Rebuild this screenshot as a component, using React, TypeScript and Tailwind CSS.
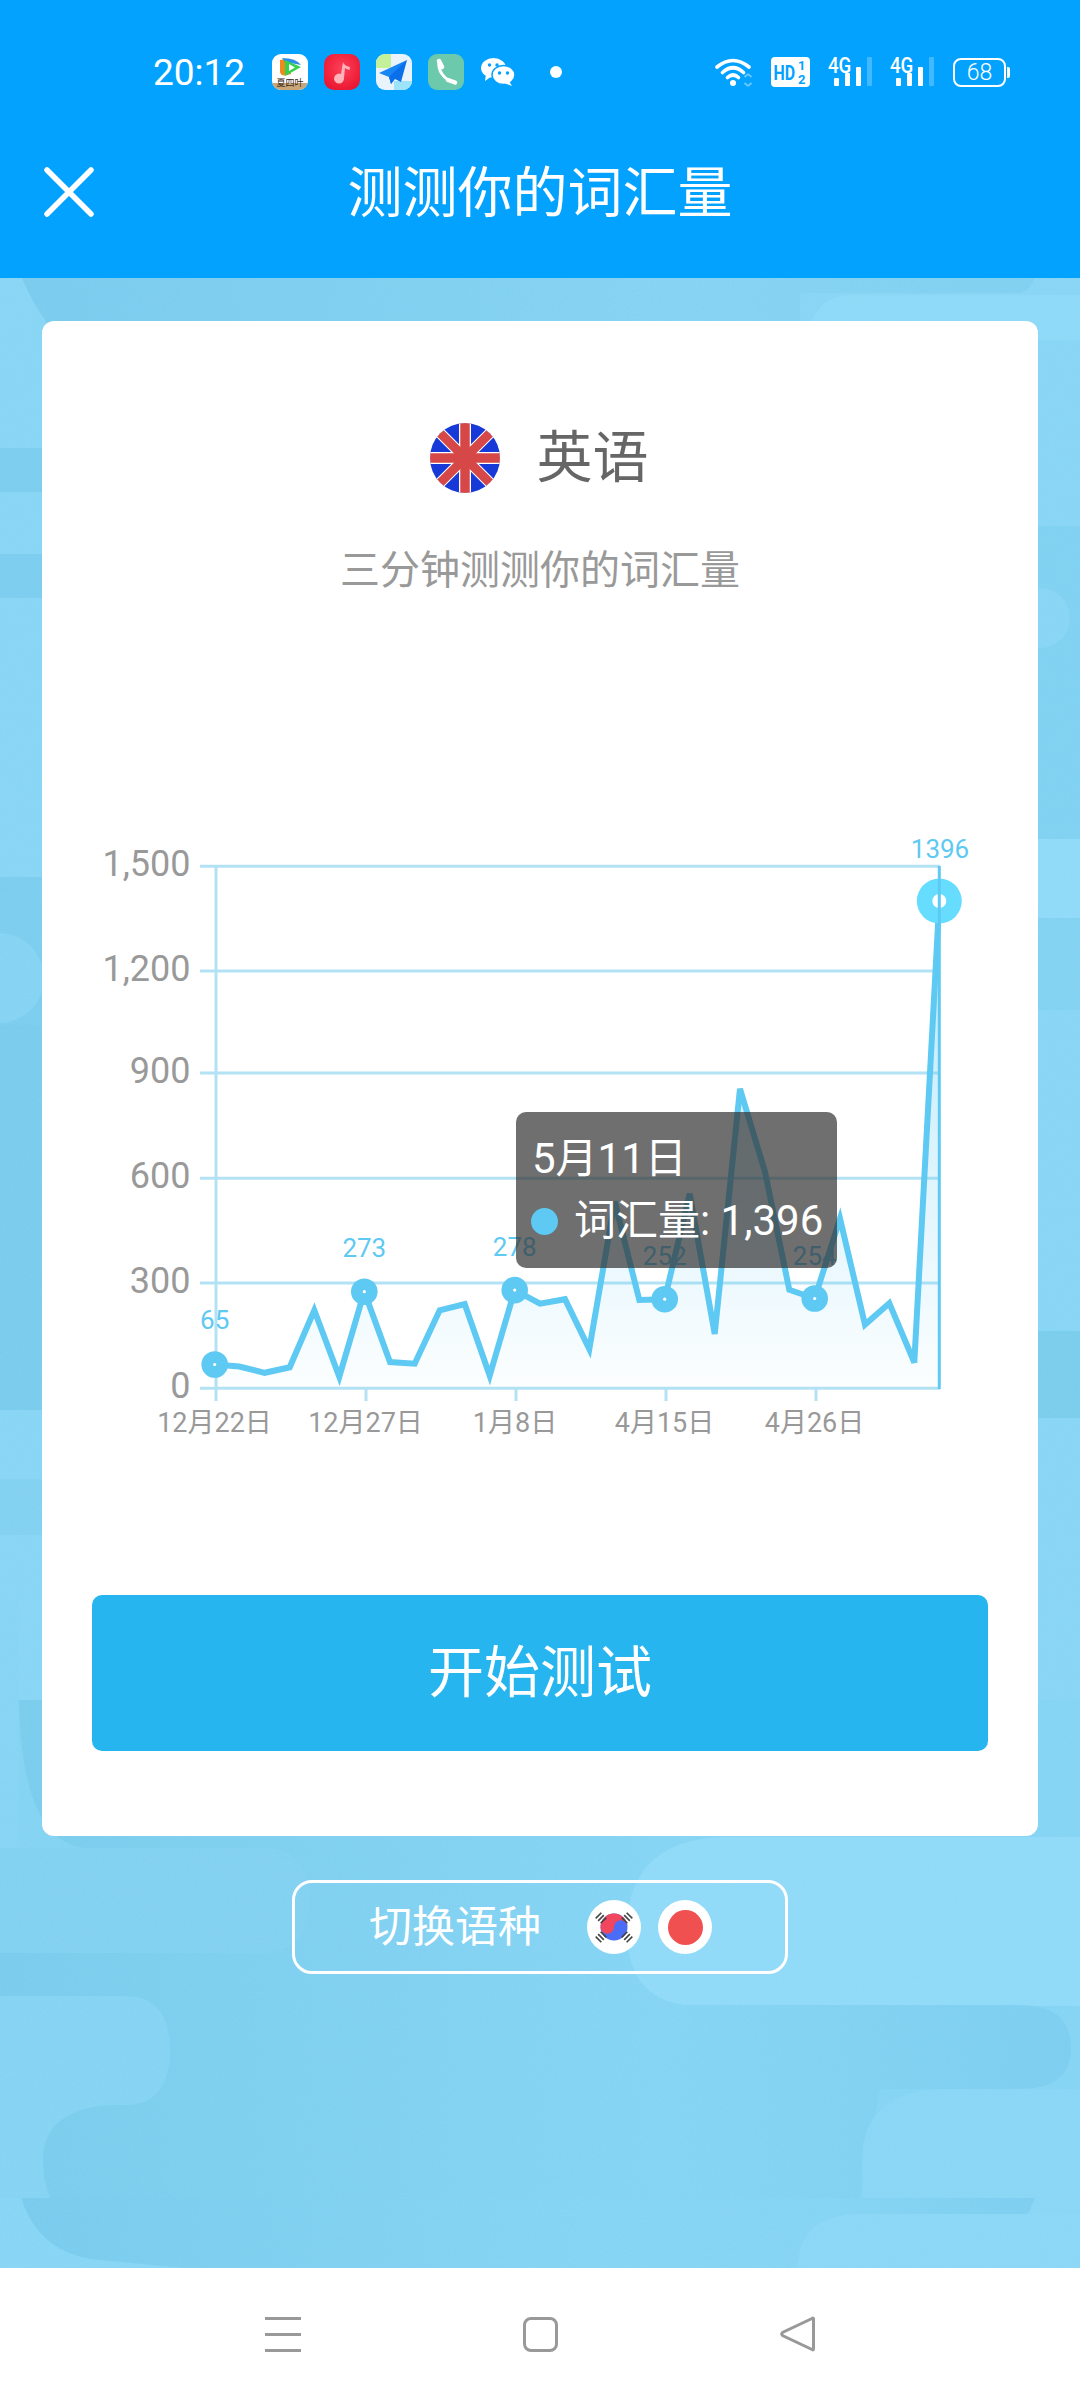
import React from "react";

const font = "font-['Roboto','Noto_Sans_CJK_SC',sans-serif]";

const pts: [number, number][] = [
  [214.7, 1364.5], [239.3, 1366.5], [264.7, 1372.8], [289.7, 1367.3], [314.3, 1310.3], [339.3, 1376.7],
  [364.3, 1291.7], [390, 1362.1], [414.7, 1363.7], [439.7, 1310.3], [464.7, 1304], [489.7, 1375.6],
  [514.7, 1290.1], [540, 1303.6], [565, 1299.2], [589.3, 1349], [614.7, 1201.6], [639.3, 1300],
  [664.7, 1299.2], [689.7, 1193.7], [714.7, 1334], [740, 1088.9], [765, 1171.9], [789.3, 1289.8],
  [814.7, 1298.5], [840, 1218.6], [865, 1324.6], [889.3, 1303.2], [914.3, 1362.5], [939.3, 901],
];
const lineStr = pts.map((p) => p.join(",")).join(" ");
const areaStr = `214.7,1388 ${lineStr} 939.3,1388`;
const grids = [866.3, 971, 1073, 1178.2, 1283, 1388.2];
const yLabels = ["1,500", "1,200", "900", "600", "300", "0"];
const ticks = [216, 366, 516, 666, 816];
const xLabels: [number, string][] = [[214.5, "12月22日"], [365.5, "12月27日"], [515, "1月8日"], [664.5, "4月15日"], [814.5, "4月26日"]];
const markers: [number, number][] = [[214.7, 1364.5], [364.3, 1291.7], [514.7, 1290.1], [664.7, 1299.2], [814.7, 1298.5]];
const valueLabels: [number, number, string][] = [[214.7, 1329, "65"], [364.3, 1257, "273"], [514.7, 1256, "278"], [664.7, 1265, "252"], [814.7, 1265, "254"], [940, 857.6, "1396"]];

function Background() {
  const dark = "#7ccdef";
  const mid = "#82d1f2";
  const light = "#90daf8";
  const soft = "#88d5f5";
  return (
    <svg className="absolute inset-0 w-full h-full" viewBox="0 278 1080 1990" preserveAspectRatio="none">
      <defs>
        <linearGradient id="topDark" x1="0" x2="1" y1="0" y2="0">
          <stop offset="0" stopColor="#7acbee" />
          <stop offset="0.65" stopColor="#85d3f3" />
          <stop offset="1" stopColor="#80d0f1" />
        </linearGradient>
        <linearGradient id="midDark" x1="0" x2="1" y1="0" y2="0">
          <stop offset="0" stopColor="#7acced" />
          <stop offset="0.6" stopColor="#85d4f4" />
          <stop offset="1" stopColor="#85d4f4" />
        </linearGradient>
        <linearGradient id="rightDark" gradientUnits="userSpaceOnUse" x1="680" x2="1071" y1="0" y2="0">
          <stop offset="0" stopColor="#85d4f4" />
          <stop offset="1" stopColor="#7dcef0" />
        </linearGradient>
        <linearGradient id="bandDark" gradientUnits="userSpaceOnUse" x1="21" x2="1035" y1="0" y2="0">
          <stop offset="0" stopColor="#79cbed" />
          <stop offset="0.55" stopColor="#85d4f4" />
          <stop offset="0.8" stopColor="#85d4f4" />
          <stop offset="1" stopColor="#7dcef0" />
        </linearGradient>
        <filter id="grain" x="0" y="0" width="100%" height="100%">
          <feTurbulence type="fractalNoise" baseFrequency="0.5 0.9" numOctaves="2" seed="4" />
          <feColorMatrix values="0 0 0 0 1  0 0 0 0 1  0 0 0 0 1  0.5 0 0 0 -0.14" />
        </filter>
      </defs>
      <rect x="0" y="278" width="1080" height="1990" fill={soft} />
      {/* top */}
      <path d="M22 278 H1035 Q1030 290 1020 293 H800 V340 H60 Q35 310 22 278Z" fill="url(#topDark)" />
      <path d="M805 340 Q815 295 850 295 H1080 V340Z" fill={light} opacity="0.7" />
      {/* left column */}
      <rect x="0" y="448" width="100" height="44" fill={dark} />
      <rect x="0" y="554" width="100" height="44" fill={dark} />
      <rect x="0" y="877" width="100" height="150" fill={dark} />
      <rect x="-60" y="933" width="104" height="90" rx="45" fill="#85d3f3" />
      <rect x="0" y="1025" width="100" height="385" fill="#7acced" />
      <rect x="0" y="1479" width="100" height="56" fill={mid} />
      {/* right column */}
      <rect x="1000" y="526" width="80" height="313" fill="#80d1f2" />
      <rect x="1000" y="588" width="70" height="60" rx="30" fill="#88d5f5" />
      <rect x="1000" y="839" width="80" height="79" fill={light} />
      <rect x="1000" y="918" width="80" height="92" fill="#82d2f2" />
      <rect x="1000" y="1331" width="80" height="87" fill="#7acdec" />
      {/* lower part */}
      <rect x="0" y="1700" width="1080" height="568" fill="url(#midDark)" />
      <path d="M0 1700 H19 Q22 1848 90 1848 H0Z" fill="#84d3f3" />
      <rect x="0" y="1600" width="19" height="248" fill="#86d4f4" />
      <path d="M0 1848 H260 Q310 1848 310 1900 Q310 1953 260 1953 H0Z" fill="#82d1f1" />
      <path d="M627 1930 C627 1880 650 1837 730 1837 H1080 V2006 H700 Q627 2006 627 1930Z" fill={light} />
      <path d="M680 2005 H1020 Q1071 2005 1071 2048 Q1071 2089 1020 2089 H880 L860 2198 H680Z" fill="url(#rightDark)" />
      <path d="M0 1996 H125 Q170 1996 170 2050 Q170 2105 125 2105 H0Z" fill="#85d3f3" />
      <path d="M0 2105 H110 Q43 2110 43 2160 Q43 2190 60 2220 H0Z" fill="#85d3f3" />
      <path d="M950 2089 Q862 2089 862 2160 V2198 H1080 V2089Z" fill="#89d6f5" />
      <path d="M21 2198 H1035 Q1033 2210 1025 2214 H860 V2268 H185 L100 2260 Q40 2255 21 2198Z" fill="url(#bandDark)" />
      <path d="M797 2268 Q800 2214 860 2214 H1080 V2268Z" fill="#8bd7f6" />
      <path d="M1035 2198 H1080 V2214 H1028Z" fill="#89d6f5" />
      <path d="M0 2198 H21 Q40 2255 100 2260 L185 2268 H0Z" fill="#87d5f5" />
      <rect x="0" y="278" width="1080" height="1990" filter="url(#grain)" opacity="0.14" />
    </svg>
  );
}

function StatusIcons() {
  return (
    <div className="flex items-center">
      {/* video */}
      <svg width="36" height="36" viewBox="0 0 36 36" className="mr-[16px]">
        <defs><clipPath id="c1"><rect width="36" height="36" rx="9" /></clipPath></defs>
        <g clipPath="url(#c1)">
          <rect width="36" height="36" fill="#fff" />
          <rect y="29" width="36" height="7" fill="#c9a678" />
          <path d="M8 6 Q20 3 19 12 L19 20 Q8 24 8 17Z" fill="#f08a1d" />
          <path d="M10 4 Q24 4 29 11 L13 8Z" fill="#2f8fe8" />
          <path d="M13 6 L29 13 L13 22Z" fill="#35d14f" />
          <path d="M17 10 L23 13.5 L17 17Z" fill="#fff" />
          <text x="18" y="32" textAnchor="middle" fontSize="9" fill="#3a2a1a" fontFamily="'Noto Sans CJK SC',sans-serif">夏四叶</text>
        </g>
      </svg>
      {/* music */}
      <svg width="36" height="36" viewBox="0 0 36 36" className="mr-[16px]">
        <defs>
          <radialGradient id="r1" cx="0.5" cy="0.4" r="0.7"><stop offset="0" stopColor="#ff4058" /><stop offset="1" stopColor="#e8122c" /></radialGradient>
        </defs>
        <rect width="36" height="36" rx="10" fill="url(#r1)" />
        <path d="M19 8 Q20 12 26 13 L25.5 16 Q22 15 21 14 L20 24 A5 5 0 1 1 17 20Z" fill="#ffb3ba" />
      </svg>
      {/* map */}
      <svg width="36" height="36" viewBox="0 0 36 36" className="mr-[16px]">
        <defs><clipPath id="c3"><rect width="36" height="36" rx="9" /></clipPath></defs>
        <g clipPath="url(#c3)">
          <rect width="36" height="36" fill="#e8f3fb" />
          <rect width="15" height="14" fill="#c5f09a" />
          <rect x="18" y="27" width="18" height="9" fill="#9fe3fb" />
          <path d="M31 6 L3 19 L13 23 L15 30Z" fill="#1685f5" />
          <path d="M31 6 L13 23 L15 30 L19 25 L25 28Z" fill="#0a6fe8" />
        </g>
      </svg>
      {/* phone */}
      <svg width="36" height="36" viewBox="0 0 36 36" className="mr-[17px]">
        <rect width="36" height="36" rx="9" fill="#6cc9ab" />
        <path d="M11 8 Q10 14 14 20 Q19 27 26 28" fill="none" stroke="#fff" strokeWidth="3" />
        <path d="M11 7 L14 13 M20 26 L27 28.5" stroke="#fff" strokeWidth="4.5" strokeLinecap="round" />
      </svg>
      {/* wechat */}
      <svg width="34" height="28" viewBox="0 0 34 28">
        <ellipse cx="12.5" cy="10" rx="12.5" ry="10" fill="#fff" />
        <path d="M5 16 L4 23 L11 18Z" fill="#fff" />
        <ellipse cx="22.5" cy="17" rx="11.5" ry="9.5" stroke="#03a2ff" strokeWidth="1.5" fill="#fff" />
        <path d="M28 23 L31 28 L23 25Z" fill="#fff" />
        <circle cx="8.5" cy="7" r="1.7" fill="#03a2ff" />
        <circle cx="16" cy="7" r="1.7" fill="#03a2ff" />
        <circle cx="18.5" cy="15" r="1.7" fill="#03a2ff" />
        <circle cx="26.5" cy="15" r="1.7" fill="#03a2ff" />
      </svg>
      <div className="ml-[35px] w-[12px] h-[12px] rounded-full bg-white" />
    </div>
  );
}

function Signal({ mr }: { mr: string }) {
  return (
    <svg width="44" height="38" viewBox="0 -8 44 38" className={`-mt-[8px] ${mr}`}>
      <text transform="translate(0 16) scale(0.85 1)" fontSize="22" fontWeight="500" fill="#fff" fontFamily="Roboto,sans-serif">4G</text>
      <rect x="6" y="21" width="5" height="8" rx="1" fill="#fff" />
      <rect x="17" y="16" width="5" height="13" rx="1" fill="#fff" />
      <rect x="28" y="10" width="5" height="19" rx="1" fill="#fff" />
      <rect x="39" y="0" width="5" height="29" rx="1" fill="#fff" opacity="0.25" />
    </svg>
  );
}

function StatusRight() {
  return (
    <div className="flex items-center">
      <svg width="38" height="30" viewBox="0 0 38 30" className="mr-[18px]">
        <g fill="none" stroke="#fff" strokeWidth="3.6" strokeLinecap="round">
          <path d="M2 10 Q18 -3 34 10" />
          <path d="M7.5 15.5 Q18 6 28.5 15.5" />
          <path d="M12.5 20.5 Q18 15.5 23.5 20.5" />
        </g>
        <circle cx="18" cy="26" r="3" fill="#fff" />
        <path d="M33 17 L29.5 20 M33 17 L36.5 20 M33 29 L29.5 26 M33 29 L36.5 26" stroke="#fff" strokeOpacity="0.4" strokeWidth="2" fill="none" />
      </svg>
      <div className="relative w-[39px] h-[30px] mr-[18px] rounded-[4px] bg-white">
        <svg width="39" height="30" viewBox="0 0 39 30" className="absolute inset-0">
          <text transform="translate(2.5 23) scale(0.76 1)" fontSize="21" fontWeight="700" fill="#03a2ff" fontFamily="Roboto,sans-serif">HD</text>
          <text x="27" y="13" fontSize="13" fontWeight="700" fill="#03a2ff" fontFamily="Roboto,sans-serif">1</text>
          <text x="27" y="27" fontSize="13" fontWeight="700" fill="#03a2ff" fontFamily="Roboto,sans-serif">2</text>
        </svg>
      </div>
      <Signal mr="mr-[18px]" />
      <Signal mr="mr-[19px]" />
      <div className="relative flex items-center justify-center w-[53px] h-[29px] rounded-[8px] border-[2.5px] border-white text-white text-[23px] font-light leading-none">
        68
        <div className="absolute left-[52px] top-[7px] w-[3px] h-[11px] rounded-r-[2px] bg-white" />
      </div>
    </div>
  );
}

function UkFlag() {
  const d = "M6 6 L64 64 M64 6 L6 64";
  const c = "M35 0 V70 M0 35 H70";
  return (
    <svg width="70" height="70" viewBox="0 0 70 70">
      <defs><clipPath id="uk"><circle cx="35" cy="35" r="35" /></clipPath></defs>
      <g clipPath="url(#uk)">
        <rect width="70" height="70" fill="#1639d8" />
        <path d={d} stroke="#fff" strokeWidth="11" strokeLinecap="square" />
        <path d={c} stroke="#fff" strokeWidth="12" />
        <path d={d} stroke="#d64848" strokeWidth="9" strokeLinecap="square" />
        <path d={c} stroke="#d64848" strokeWidth="9.5" />
      </g>
    </svg>
  );
}

function KrFlag() {
  const tri = "M0 -3.5 H8 M0 0 H8 M0 3.5 H8";
  return (
    <svg width="54" height="54" viewBox="0 0 54 54">
      <circle cx="27" cy="27" r="27" fill="#fff" />
      <circle cx="27" cy="27" r="13.5" fill="#4a6cf7" />
      <path d="M13.5 27 A13.5 13.5 0 0 1 40.5 27 A6.75 6.75 0 0 0 27 27 A6.75 6.75 0 0 1 13.5 27Z" fill="#f0465e" />
      <g stroke="#444" strokeWidth="1.6" fill="none">
        <path d={tri} transform="translate(10 18) rotate(-45 4 0)" />
        <path d={tri} transform="translate(36 18) rotate(45 4 0)" />
        <path d={tri} transform="translate(10 37) rotate(45 4 0)" />
        <path d={tri} transform="translate(36 37) rotate(-45 4 0)" />
      </g>
    </svg>
  );
}

function Chart() {
  return (
    <div className="relative mt-[231px] h-[620px]">
      <svg width="996" height="620" viewBox="42 830 996 620" className="block">
        <defs>
          <linearGradient id="area" gradientUnits="userSpaceOnUse" x1="0" x2="0" y1="880" y2="1388">
            <stop offset="0" stopColor="#5ec9f2" stopOpacity="0.45" />
            <stop offset="1" stopColor="#5ec9f2" stopOpacity="0.02" />
          </linearGradient>
        </defs>
        {grids.map((y, i) => (
          <g key={y}>
            <line x1="200" x2="940" y1={y} y2={y} stroke="#b2e2f3" strokeWidth="3" />
            <text x="190.5" y={y + 10} textAnchor="end" fontSize="36" fill="#999">{yLabels[i]}</text>
          </g>
        ))}
        <line x1="216" x2="216" y1="865" y2="1401" stroke="#b2e2f3" strokeWidth="3" />
        {ticks.slice(1).map((x) => (
          <line key={x} x1={x} x2={x} y1="1388" y2="1401" stroke="#b2e2f3" strokeWidth="3" />
        ))}
        {xLabels.map(([x, t]) => (
          <text key={t} x={x} y="1432" textAnchor="middle" fontSize="27" fill="#999">{t}</text>
        ))}
        <polygon points={areaStr} fill="url(#area)" />
        <polyline points={lineStr} fill="none" stroke="#5ec9f2" strokeWidth="6" strokeLinejoin="miter" />
        {markers.map(([x, y]) => (
          <g key={x}>
            <circle cx={x} cy={y} r="13.3" fill="#5ec9f2" />
            <circle cx={x} cy={y} r="1.6" fill="#fff" />
          </g>
        ))}
        <circle cx="939.3" cy="901" r="22.5" fill="#66dcff" />
        <circle cx="939.3" cy="901" r="7" fill="#fff" />
        <line x1="939.3" x2="939.3" y1="866" y2="1389" stroke="#5ec9f2" strokeWidth="3" />
        {valueLabels.map(([x, y, t]) => (
          <text key={t} x={x} y={y} textAnchor="middle" fontSize="26" fill="#5ec9f2">{t}</text>
        ))}
      </svg>
      <div className="absolute left-[474px] top-[282px] w-[321px] h-[156px] rounded-[10px] bg-[rgba(50,50,50,0.7)] text-white text-[42px] leading-[62px] pl-[16px] pt-[16px]">
        <div>5月11日</div>
        <div className="flex items-center">
          <span className="w-[27px] h-[27px] rounded-full bg-[#5ec9f2] mr-[16px] -ml-[1px]" />
          <span>词汇量: 1,396</span>
        </div>
      </div>
    </div>
  );
}

export default function App() {
  return (
    <div className={`${font} w-[1080px] h-[2400px] flex flex-col bg-white overflow-hidden`}>
      <header className="h-[278px] bg-[#03a2ff] text-white shrink-0">
        <div className="h-[144px] flex items-center justify-between pl-[153px] pr-[74px]">
          <div className="flex items-center">
            <span className="text-[37px] leading-none mr-[27px]">20:12</span>
            <StatusIcons />
          </div>
          <StatusRight />
        </div>
        <div className="relative h-[96px] flex items-center justify-center text-[55px] leading-none pt-[2px]">
          <svg width="50" height="50" viewBox="0 0 50 50" className="absolute left-[44px] top-[23px]">
            <path d="M3 3 L47 47 M47 3 L3 47" stroke="#fff" strokeWidth="5.5" strokeLinecap="round" />
          </svg>
          测测你的词汇量
        </div>
      </header>

      <main className="relative flex-1 pt-[43px]">
        <Background />
        <section className="relative mx-[42px] rounded-[12px] bg-white flex flex-col pt-[102px] pb-[85px]">
          <div className="flex items-center justify-center h-[70px] pr-[2px]">
            <UkFlag />
            <span className="ml-[37px] text-[56px] leading-none text-[#666]">英语</span>
          </div>
          <div className="mt-[50px] text-center text-[40px] leading-[56px] text-[#999]">三分钟测测你的词汇量</div>
          <Chart />
          <button className="mt-[145px] mx-[50px] h-[156px] rounded-[10px] bg-[#26b5ef] text-white text-[56px]">开始测试</button>
        </section>
        <div className="relative mt-[44px] mx-auto w-[496px] h-[94px] rounded-[20px] border-[3px] border-white flex items-center pl-[74px] text-white text-[43px]">
          <span className="mr-[46px] leading-none">切换语种</span>
          <KrFlag />
          <span className="ml-[17px] w-[54px] h-[54px] rounded-full bg-white flex items-center justify-center">
            <span className="w-[35px] h-[35px] rounded-full bg-[#f05050]" />
          </span>
        </div>
      </main>

      <nav className="h-[132px] shrink-0 bg-white relative flex items-center justify-center gap-[222px]">
        <div className="w-[36px] h-[35px] flex flex-col justify-between">
          <div className="h-[3px] bg-[#999]" />
          <div className="h-[3px] bg-[#999]" />
          <div className="h-[3px] bg-[#999]" />
        </div>
        <div className="w-[35px] h-[35px] rounded-[8px] border-[3px] border-[#999]" />
        <svg width="36" height="36" viewBox="0 0 36 36">
          <path d="M33.5 3 Q33.5 1.5 32 2.5 L2.5 16.5 Q1 18 2.5 19.5 L32 33.5 Q33.5 34.5 33.5 33Z" fill="none" stroke="#999" strokeWidth="3" />
        </svg>
      </nav>
    </div>
  );
}
